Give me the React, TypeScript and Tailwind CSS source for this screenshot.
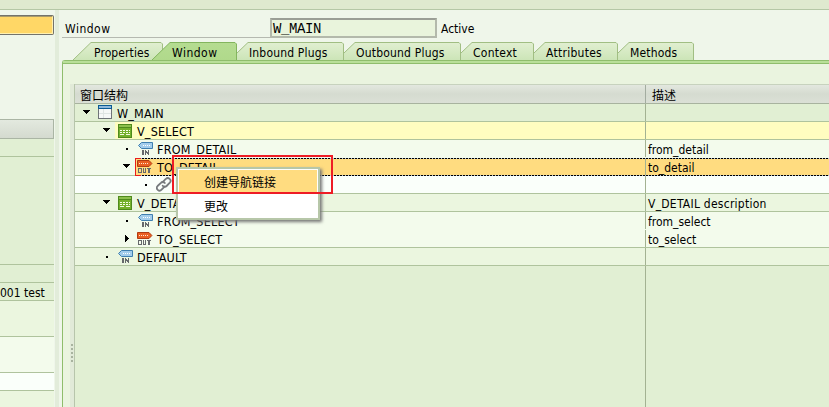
import React from "react";

type Kind = "window" | "view" | "in" | "out" | "link";

function Icon({ kind }: { kind: Kind }) {
  return (
    <svg width="16" height="16" viewBox="0 0 16 16" className="shrink-0" shapeRendering={kind === "link" ? "auto" : "crispEdges"}>
      {kind === "window" && (
        <>
          <rect x="1" y="0" width="14" height="14" fill="#6f7478" />
          <rect x="2" y="4" width="12" height="9" fill="#f6f8f7" />
          <rect x="1" y="0" width="14" height="4" fill="#0b5a94" />
          <rect x="2" y="1" width="12" height="2" fill="#8fb9dc" />
          <path d="M6.5 4v9M2 8.5h12" stroke="#dfe5e3" />
        </>
      )}
      {kind === "view" && (
        <>
          <rect x="1" y="1" width="14" height="14" fill="#4f8a1c" />
          <rect x="2" y="5" width="12" height="9" fill="#74b02c" />
          <rect x="2" y="2" width="12" height="2" fill="#8cc04c" />
          <path d="M3 7.5h10M3 9.5h10" stroke="#f7ffe7" strokeDasharray="2 1" />
          <path d="M3 11.5h4M9 11.5h4" stroke="#f1fadf" />
        </>
      )}
      {kind === "in" && (
        <>
          <path d="M4.5 1.5H15.5V7.5H4.5L1.5 4.5Z" fill="#a3cdec" stroke="#3f7fb0" shapeRendering="auto" />
          <path d="M6 4.5h8" stroke="#fff" strokeDasharray="1 1" />
          <path d="M5 9h2v5h-2ZM8 9h1v5h-1ZM9 10h1v2h-1ZM10 11h1v2h-1ZM11 9h1v5h-1Z" fill="#65686b" />
        </>
      )}
      {kind === "out" && (
        <>
          <path d="M.5 1.5H12L14.9 4.5 12 7.5H.5Z" fill="#ea5f22" stroke="#b23a10" shapeRendering="auto" />
          <path d="M2 4.5h10" stroke="#ffe6d0" strokeDasharray="1 1" />
          <path d="M1 9h4v5h-4ZM2 10v3h1.500v-3ZM6 9h1v4h1v-4h1v5h-3ZM10 9h4v1h-1v4h-2v-4h-1Z" fill="#65686b" fillRule="evenodd" />
        </>
      )}
      {kind === "link" && (
        <g fill="none" stroke="#777b7d" strokeWidth="1.8" strokeLinecap="round">
          <path d="M6.600 5.200 9.800 2a2.700 2.700 0 0 1 4 3.700L10.600 9a2.600 2.600 0 0 1-3.900-.2" />
          <path d="M8.800 9.400 5.600 12.700a2.700 2.700 0 0 1-4-3.700L4.900 5.800a2.600 2.600 0 0 1 3.900.2" />
        </g>
      )}
    </svg>
  );
}

function Marker({ type }: { type: "down" | "right" | "dot" }) {
  return (
    <svg width="8" height="8" viewBox="0 0 8 8" className="mt-1 shrink-0" shapeRendering="crispEdges">
      {type === "down" && <path d="M0 2H7V3H6V4H5V5H4V6H3V5H2V4H1V3H0Z" />}
      {type === "right" && <path d="M2 1H3V2H4V3H5V4H6V5H5V6H4V7H3V8H2Z" />}
      {type === "dot" && <path d="M3 4H5V6H3Z" />}
    </svg>
  );
}

const tabs = [
  { label: "Properties", box: "w-[90px] pl-[21px]", text: "tracking-[0.1px]", w: 90, x0: 0, y0: 18, x1: 18 },
  { label: "Window", box: "w-[85px] -ml-[11px] pl-5", text: "tracking-[0.5px]", w: 85, x0: 0, y0: 18, x1: 18, active: true },
  { label: "Inbound Plugs", box: "w-[107px] pl-3", text: "tracking-[0.17px]", w: 107, x0: 0, y0: 11, x1: 11 },
  { label: "Outbound Plugs", box: "w-[117px] pl-3", text: "tracking-[0.2px]", w: 117, x0: 0, y0: 11, x1: 11 },
  { label: "Context", box: "w-[73px] pl-3", text: "tracking-[0.25px]", w: 73, x0: 0, y0: 11, x1: 11 },
  { label: "Attributes", box: "w-[84px] pl-3", text: "tracking-[0.27px]", w: 84, x0: 0, y0: 11, x1: 11 },
  { label: "Methods", box: "w-[76px] pl-3", text: "tracking-[0.15px]", w: 76, x0: 0, y0: 11, x1: 11 },
];

type Row = { name: string; desc?: string; marker: "down" | "right" | "dot"; icon: Kind; pad: string; bg: string; line: string; head: string };
const rows: Row[] = [
  { name: "W_MAIN", marker: "down", icon: "window", pad: "pl-2", bg: "bg-[#e1efd3]", line: "border-[#afc39d]", head: "" },
  { name: "V_SELECT", marker: "down", icon: "view", pad: "pl-7", bg: "bg-[#fffdc0]", line: "border-[#afc39d]", head: "bg-[#ebf6df]" },
  { name: "FROM_DETAIL", desc: "from_detail", marker: "dot", icon: "in", pad: "pl-12", bg: "bg-[#f3fbec]", line: "border-[#f3fbec]", head: "" },
  { name: "TO_DETAIL", desc: "to_detail", marker: "down", icon: "out", pad: "pl-12", bg: "bg-[#ffdc80]", line: "border-[#afc39d]", head: "bg-[#f3fbec]" },
  { name: "", marker: "dot", icon: "link", pad: "pl-[67px]", bg: "bg-[#fafffa]", line: "border-[#afc39d]", head: "" },
  { name: "V_DETAIL", desc: "V_DETAIL description", marker: "down", icon: "view", pad: "pl-7", bg: "bg-[#ebf6df]", line: "border-[#afc39d]", head: "" },
  { name: "FROM_SELECT", desc: "from_select", marker: "dot", icon: "in", pad: "pl-12", bg: "bg-[#f3fbec]", line: "border-[#f3fbec]", head: "" },
  { name: "TO_SELECT", desc: "to_select", marker: "right", icon: "out", pad: "pl-12", bg: "bg-[#f3fbec]", line: "border-[#afc39d]", head: "" },
  { name: "DEFAULT", marker: "dot", icon: "in", pad: "pl-7", bg: "bg-[#ebf6df]", line: "border-[#afc39d]", head: "" },
];

const dashes = "h-px bg-[repeating-linear-gradient(90deg,#000_0_2px,#b4c8dc_2px_3px)]";

function TreeRow({ row }: { row: Row }) {
  const selected = row.name === "TO_DETAIL";
  return (
    <div className={`relative flex h-[18px] border-b ${row.bg} ${row.line}`}>
      <div className="flex w-[571px] border-r border-[#a3b292]">
        <div className={`flex shrink-0 items-start ${row.pad} ${row.head}`}>
          <Marker type={row.marker} />
          <span className="w-1" />
        </div>
        <div className="flex items-start pt-px pl-[2px]">
          <Icon kind={row.icon} />
          <span className="ml-1 text-[12.5px] leading-[17px] tracking-[0.18px]">{row.name}</span>
        </div>
      </div>
      <span className={`pt-[2px] pl-[2px] leading-[17px] ${row.marker === "down" && row.desc !== "to_detail" ? "tracking-[0.25px]" : ""}`}>{row.desc}</span>
      {selected && (
        <>
          <div className={`absolute top-0 right-0 left-[61px] ${dashes}`} />
          <div className={`absolute right-0 -bottom-px left-[61px] ${dashes}`} />
          <div className="absolute left-[60px] top-0 h-[18px] w-[6px] border-y border-l border-[#e91c1c]" />
        </>
      )}
    </div>
  );
}

const cjk = "font-['Noto_Sans_CJK_SC',sans-serif]";

export default function App() {
  return (
    <div className="relative flex h-[407px] w-[829px] flex-col overflow-hidden bg-[#eff6ea] font-['DejaVu_Sans_Condensed','DejaVu_Sans',sans-serif] text-[12px] whitespace-nowrap text-black [font-stretch:condensed]">
      <div className="h-[10px] shrink-0 border-b border-[#b5c7a6] bg-[#dfe9cf]" />
      <div className="flex min-h-0 flex-1">
        <aside className="flex w-[55px] shrink-0 flex-col">
          <div className="mt-[5px] h-[20px] w-[54px] rounded-r-[2px] border border-l-0 border-[#73736b] bg-[#ffd766] shadow-[inset_-1px_-1px_0_#fff0b0,inset_0_1px_0_#a89a6a]" />
          <div className="mt-[84px] h-5 w-[54px] border border-l-0 border-[#aab5a4] bg-linear-to-b from-[#e3e9df] to-[#d4dacf]" />
          <div className="h-[18px] w-[54px] border-b border-[#afc39d] bg-[#e1efd3]" />
          <div className="h-[108px] w-[54px] border-b border-[#afc39d] bg-[#e1efd3]" />
          <div className="h-[18px] w-[54px] border-b border-[#afc39d] bg-[#e1efd3]" />
          <div className="h-[18px] w-[54px] border-b border-[#afc39d] bg-[#e1efd3] pt-[2px] leading-[17px]">001 test</div>
          <div className="h-9 w-[54px] border-b border-[#afc39d] bg-[#ebf6df]" />
          <div className="h-9 w-[54px] border-b border-[#afc39d] bg-[#f3fbec]" />
          <div className="h-[18px] w-[54px] border-b border-[#afc39d] bg-[#fafffa]" />
          <div className="w-[54px] flex-1 bg-[#ebf6df]" />
        </aside>
        <div className="w-1 shrink-0 bg-[#e2ecda]" />
        <main className="flex min-w-0 flex-1 flex-col pl-[3px]">
          <div className="flex h-7 shrink-0 items-end">
            <div className="h-[18px] w-[208px] border-b border-[#b5b9b0] pl-[3px] leading-[18px] tracking-[0.5px]">Window</div>
            <div className="h-5 w-[167px] border-2 border-[#b3b9ab] border-t-[#9a9e95] bg-[#e9f4dc] pl-px font-['Liberation_Mono',monospace] text-[14px] leading-[18px] tracking-[-0.4px] text-black">W_MAIN</div>
            <span className="h-[18px] pl-1 leading-[18px]">Active</span>
          </div>
          <div className="mt-1 flex h-[18px] shrink-0 pl-[11px]">
            {tabs.map((t) => (
              <div key={t.label} className={`relative flex h-[18px] shrink-0 ${t.box}`}>
                <svg className="absolute inset-0" width={t.w} height="18">
                  <defs>
                    <linearGradient id={t.label.replace(" ", "")} x1="0" y1="0" x2="0" y2="1">
                      <stop stopColor={t.active ? "#b5dc91" : "#e1efd1"} />
                      <stop offset="1" stopColor={t.active ? "#b0d98b" : "#cce5b7"} />
                    </linearGradient>
                  </defs>
                  <path d={`M0 18V${t.y0}L${t.x1} .5H${t.w - 2}L${t.w - 0.5} 2V18Z`} fill={`url(#${t.label.replace(" ", "")})`} />
                  <path d={`M0 ${t.y0}L${t.x1} .5H${t.w - 2}L${t.w - 0.5} 2V18`} fill="none" stroke={t.active ? "#83b55e" : "#a1be83"} />
                </svg>
                <span className={`relative pt-[3px] leading-[16px] ${t.text}`}>{t.label}</span>
              </div>
            ))}
          </div>
          <div className="flex min-h-0 flex-1 flex-col rounded-tl-[3px] border-t border-l border-[#8fbd6c] bg-[#eaf4df]">
            <div className="h-[3px] shrink-0 border-b border-[#8fbd6c] bg-[#b9df99]" />
            <div className="mt-5 flex min-h-0 flex-1 pl-[7px]">
              <div className="flex w-[5px] shrink-0 flex-col items-center gap-[2px] border-r border-[#b7c5ab] bg-[#e1ead8] pt-[260px]">
                {[0, 1, 2, 3, 4].map((i) => <span key={i} className="size-[2px] shrink-0 bg-[#a8b39f]" />)}
              </div>
              <section className="flex min-w-0 flex-1 flex-col bg-[#e1efd3]">
                <div className={`flex h-5 shrink-0 border-y border-t-[#c7d2be] border-b-[#a8b39f] bg-linear-to-b from-[#e3e8df] via-[#d5dbd0] to-[#dbe0d6] leading-[19px] ${cjk}`}>
                  <div className="w-[571px] border-r border-[#a3aca0] pl-[5px]">窗口结构</div>
                  <div className="pl-1.5">描述</div>
                </div>
                {rows.map((r, i) => <TreeRow key={i} row={r} />)}
                <div className="w-[571px] flex-1 border-r border-[#a3b292]" />
              </section>
            </div>
          </div>
        </main>
      </div>
      <div className={`absolute top-[167px] left-[176px] flex h-[53px] w-[144px] flex-col border-2 border-[#b7c7a9] bg-white p-px shadow-[2px_2px_3px_#777] ${cjk}`}>
        <div className="h-[23px] bg-[#ffdc80] pl-[25px] leading-[24px]">创建导航链接</div>
        <div className="h-6 pl-[25px] leading-[25px]">更改</div>
      </div>
      <div className="absolute top-[155px] left-[172px] h-[39px] w-[161px] border-2 border-[#ee1c25]" />
    </div>
  );
}
